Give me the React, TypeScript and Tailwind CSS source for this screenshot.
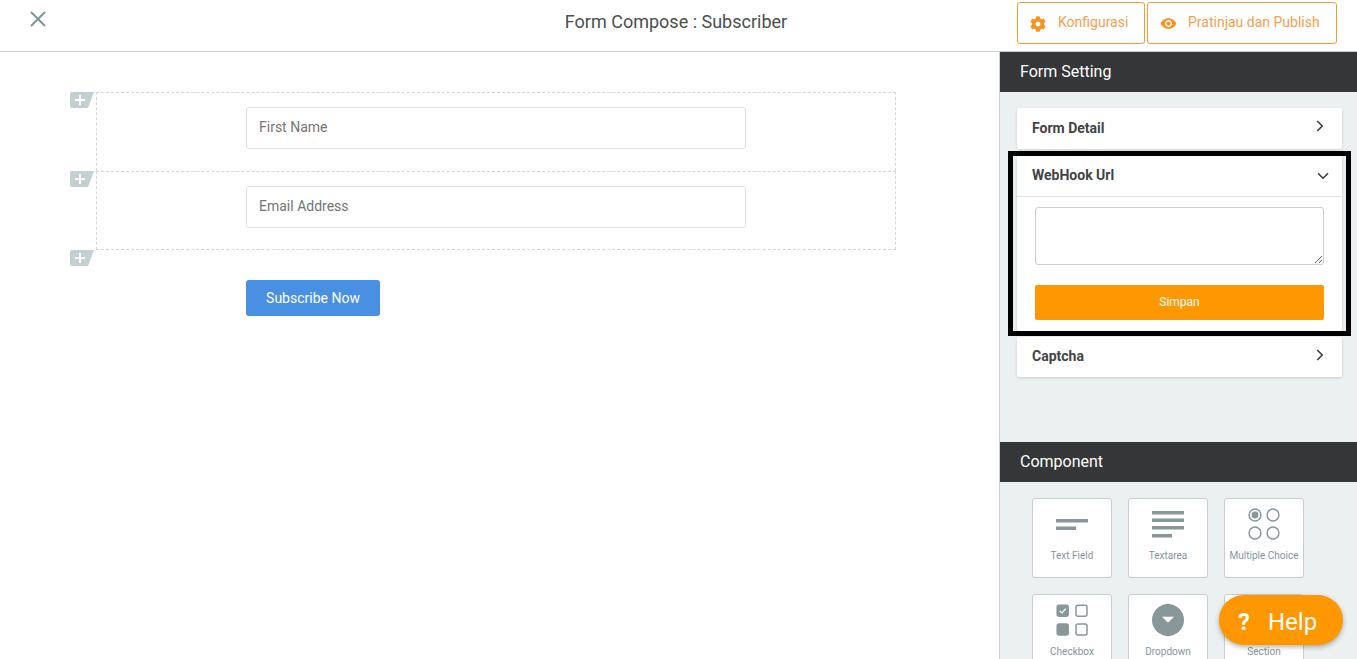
import React from 'react';
import { X, ChevronRight, ChevronDown } from 'lucide-react';
import { FaCog } from 'react-icons/fa';
import { MdVisibility } from 'react-icons/md';

const PlusTag: React.FC<{ className?: string }> = ({ className }) => (
  <svg className={className} width="24" height="16" viewBox="0 0 24 16">
    <path d="M2 0H24L18 16H2a2 2 0 0 1-2-2V2a2 2 0 0 1 2-2z" fill="#c3d0d1" />
    <path d="M10 3v10M5 8h10" stroke="#fff" strokeWidth="2" />
  </svg>
);

const FormRow: React.FC<{ placeholder: string; last?: boolean }> = ({ placeholder, last }) => (
  <div className={`relative h-[79px] w-[800px] border-l border-r border-t border-dashed border-[#d0d9d9] ${last ? 'border-b' : ''}`}>
    <PlusTag className="absolute left-[-27px] top-[-1px]" />
    {last && <PlusTag className="absolute left-[-27px] top-[78px]" />}
    <div className="ml-[149px] mt-[14px] flex h-[42px] w-[500px] items-center rounded-[3px] border border-[#dfe3e4] bg-white px-3 pb-[2px] text-sm text-[#757575]">
      {placeholder}
    </div>
  </div>
);

const Collapsed: React.FC<{ title: string; className?: string }> = ({ title, className }) => (
  <div className={`flex items-center justify-between rounded-[2px] bg-white pb-[2px] pl-[15px] pr-[13px] shadow-[0_1px_3px_rgba(0,0,0,0.15)] ${className ?? ''}`}>
    <span className="text-sm font-bold text-[#3f4447]">{title}</span>
    <ChevronRight size={18} strokeWidth={2.3} className="mb-[3px] text-[#3f4447]" />
  </div>
);

const Tile: React.FC<{ label: string; children: React.ReactNode }> = ({ label, children }) => (
  <div className="flex h-[80px] w-[80px] flex-col items-center rounded-[3px] border border-[#c5cfd0] bg-white">
    <div className="flex h-[50px] w-full items-center justify-center">{children}</div>
    <span className="mt-[1px] whitespace-nowrap text-[10px] leading-[12px] text-[#87949a]">{label}</span>
  </div>
);

const GREY = '#88979a';

export default function App() {
  return (
    <div className="relative h-[659px] w-[1357px] overflow-hidden bg-white font-['Roboto',sans-serif]">
      <header className="flex h-[52px] items-center border-b border-[#c9cfcf] bg-white">
        <div className="w-[1000px] pl-[25px]">
          <X size={26} strokeWidth={1.8} color="#7f9496" className="mb-[14px]" />
        </div>
      </header>
      <div className="pointer-events-none absolute left-0 top-0 flex h-[44px] w-[1352px] items-center justify-center">
        <span className="text-lg text-[#4b4f50]">Form Compose : Subscriber</span>
      </div>
      <div className="absolute right-[20px] top-[2px] flex gap-[2px]">
        <button className="flex h-[42px] w-[128px] items-center rounded-[3px] border border-[#f39c33] pl-[12px] text-sm text-[#f5a04a]">
          <FaCog size={16} color="#f7931e" className="mr-[12px] mt-[1px]" />
          <span className="mb-[2px]">Konfigurasi</span>
        </button>
        <button className="flex h-[42px] w-[190px] items-center rounded-[3px] border border-[#f39c33] pl-[12px] text-sm text-[#f5a04a]">
          <MdVisibility size={17} color="#f7931e" className="mr-[11px] mt-[1px]" />
          <span className="mb-[2px]">Pratinjau dan Publish</span>
        </button>
      </div>

      <div className="flex h-[607px]">
        <main className="w-[999px] bg-white pl-[96px] pt-[40px]">
          <FormRow placeholder="First Name" />
          <FormRow placeholder="Email Address" last />
          <button className="ml-[150px] mt-[30px] h-[36px] w-[134px] rounded-[3px] bg-[#4a90e2] text-sm text-white">Subscribe Now</button>
        </main>

        <aside className="w-[358px] border-l border-[#c9cfcf] bg-[#ecf0f1]">
          <div className="flex h-[40px] items-center bg-[#353637] pl-[20px] text-base text-white">Form Setting</div>
          <div className="h-[350px] pl-[17px] pr-[15px] pt-[16px]">
            <Collapsed title="Form Detail" className="h-[41px]" />
            <div className="mt-[6px] h-[176px] rounded-[2px] bg-white shadow-[0_1px_3px_rgba(0,0,0,0.15)]">
              <div className="flex h-[42px] items-center justify-between border-b border-[#dfe3e4] pl-[15px] pr-[10px]">
                <span className="mb-[2px] text-sm font-bold text-[#3f4447]">WebHook Url</span>
                <ChevronDown size={18} strokeWidth={2.3} className="mt-[1px] text-[#3f4447]" />
              </div>
              <div className="px-[18px] pt-[10px]">
                <textarea className="block h-[58px] w-full rounded-[3px] border border-[#c5cfd0] bg-white" />
                <button className="mt-[20px] h-[35px] w-full rounded-[2px] bg-[#ff9800] pb-[2px] text-xs text-white">Simpan</button>
              </div>
            </div>
            <Collapsed title="Captcha" className="mt-[6px] h-[40px]" />
          </div>
          <div className="flex h-[40px] items-center bg-[#353637] pl-[20px] text-base text-white">Component</div>
          <div className="grid grid-cols-[80px_80px_80px] gap-x-[16px] gap-y-[16px] pl-[32px] pt-[16px]">
            <Tile label="Text Field">
              <svg width="32" height="11" viewBox="0 0 32 11" fill={GREY}>
                <rect width="32" height="3.5" y="0" />
                <rect width="20" height="3.5" y="7.5" />
              </svg>
            </Tile>
            <Tile label="Textarea">
              <svg width="32" height="27" viewBox="0 0 32 27" fill={GREY}>
                <rect width="32" height="3.5" y="0" />
                <rect width="32" height="3.5" y="7.5" />
                <rect width="32" height="3.5" y="15" />
                <rect width="20" height="3.5" y="23" />
              </svg>
            </Tile>
            <Tile label="Multiple Choice">
              <svg width="32" height="32" viewBox="0 0 32 32" fill="none" stroke={GREY} strokeWidth="1.5">
                <circle cx="7" cy="7" r="5.9" />
                <circle cx="7" cy="7" r="3.4" fill={GREY} stroke="none" />
                <circle cx="25" cy="7" r="5.9" />
                <circle cx="7" cy="25" r="5.9" />
                <circle cx="25" cy="25" r="5.9" />
              </svg>
            </Tile>
            <Tile label="Checkbox">
              <svg width="32" height="32" viewBox="0 0 32 32" fill="none" stroke={GREY} strokeWidth="1.5">
                <rect x="1.2" y="1.2" width="11" height="11" rx="2" fill={GREY} />
                <path d="M3.7 6.8l2.2 2.2 4-4.400" stroke="#fff" strokeWidth="1.2" />
                <rect x="20" y="1.2" width="11" height="11" rx="2" />
                <rect x="1.2" y="20" width="11" height="11" rx="2" fill={GREY} />
                <rect x="20" y="20" width="11" height="11" rx="2" />
              </svg>
            </Tile>
            <Tile label="Dropdown">
              <svg width="32" height="32" viewBox="0 0 32 32">
                <circle cx="16" cy="16" r="16" fill={GREY} />
                <path d="M10 12.700h12l-6 6z" fill="#fff" />
              </svg>
            </Tile>
            <Tile label="Section">
              <span />
            </Tile>
          </div>
        </aside>
      </div>

      {/* annotation box drawn over the webhook card */}
      <div className="pointer-events-none absolute left-[1008px] top-[151px] h-[185px] w-[343px] border-[5px] border-black" />

      <button className="absolute left-[1219px] top-[595px] flex h-[50px] w-[124px] items-center gap-[18px] rounded-[25px] bg-[#ff9800] pl-[19px] pt-[3px] text-2xl text-white shadow-[0_2px_5px_rgba(0,0,0,0.3)]">
        <span className="font-bold">?</span>
        <span>Help</span>
      </button>
    </div>
  );
}
